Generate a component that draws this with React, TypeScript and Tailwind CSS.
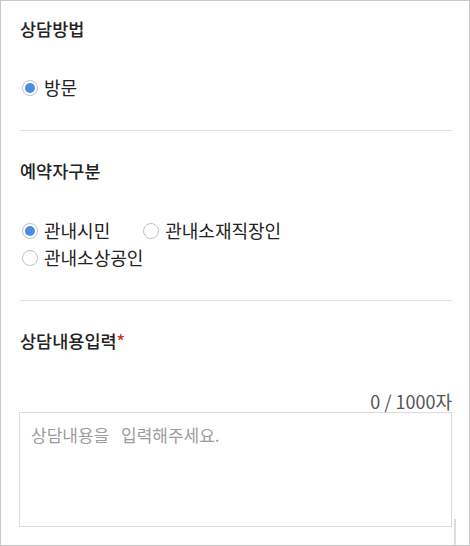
import React from "react";

const font = { fontFamily: '"Noto Sans CJK KR", "Noto Sans", sans-serif' };

function Radio({ checked, label }: { checked?: boolean; label: string }) {
  return (
    <label className="flex items-center h-[27px]">
      <span className="ml-[2px] w-4 h-4 rounded-full border border-[#c2c2c2] flex items-center justify-center bg-white">
        {checked && <span className="w-[10px] h-[10px] rounded-full bg-[#4a8de2]" />}
      </span>
      <span className="ml-[6px] text-[18px] leading-[27px] text-[#222]">{label}</span>
    </label>
  );
}

export default function App() {
  return (
    <div
      style={font}
      className="relative w-[470px] h-[546px] border border-[#c8c8c8] bg-white pl-[19px] pr-[17px] overflow-hidden"
    >
      <div className="pt-[15px]">
        <h2 className="text-[17.5px] leading-[26px] font-medium text-[#222]">상담방법</h2>
        <div className="mt-[32px]">
          <Radio checked label="방문" />
        </div>
      </div>
      <div className="mt-[29px] h-px bg-[#e2e2e2]" />
      <div className="pt-[27px]">
        <h2 className="text-[17.5px] leading-[26px] font-medium text-[#222]">예약자구분</h2>
        <div className="mt-[33px]">
          <div className="flex gap-x-[31px]">
            <Radio checked label="관내시민" />
            <Radio label="관내소재직장인" />
          </div>
          <Radio label="관내소상공인" />
        </div>
      </div>
      <div className="mt-[29px] h-px bg-[#e2e2e2]" />
      <div className="pt-[27px]">
        <h2 className="text-[17.5px] leading-[26px] font-medium text-[#222]">
          상담내용입력<span className="text-[#d0312d]">*</span>
        </h2>
        <div className="mt-[36px] text-right text-[18px] leading-[22px] text-[#555]">0 / 1000자</div>
        <textarea
          style={font}
          className="block -ml-px w-[433px] h-[115px] border border-[#dcdcdc] pl-[11px] pr-[11px] py-[10px] text-[17px] leading-[24px] resize-none outline-none placeholder:text-[#9c9c9c] [word-spacing:8px]"
          placeholder="상담내용을 입력해주세요."
        />
      </div>
      <div className="absolute left-[453px] top-[518px] w-[2px] h-[28px] bg-[#dedede]" />
    </div>
  );
}
